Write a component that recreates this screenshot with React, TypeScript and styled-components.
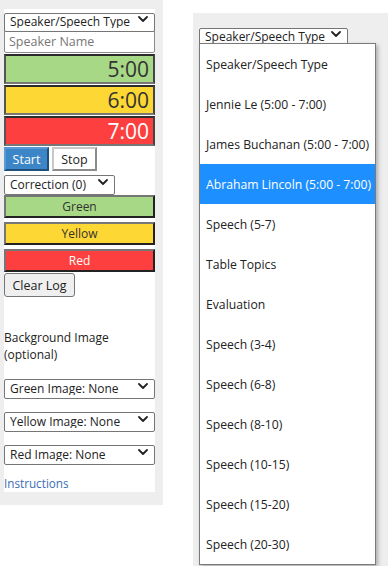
import React from "react";
import styled, { createGlobalStyle } from "styled-components";

const Global = createGlobalStyle`
  html, body { margin: 0; padding: 0; background: #fff; }
  body { font-family: "Open Sans", "Noto Sans", sans-serif; overflow: hidden; color: #222; }
  * { box-sizing: border-box; }
`;

const Page = styled.div`
  display: flex;
  align-items: flex-start;
  width: 388px;
  height: 566px;
  overflow: hidden;
`;

const Outer = styled.div`
  flex: none;
  background: #eeeeee;
  padding: 9px 8px 13px 4px;
`;

const Panel = styled.div`
  width: 151px;
  background: #fff;
  display: flex;
  flex-direction: column;
`;

const SelectWrap = styled.div<{ $w?: number; $mb?: number; $mt?: number; $h?: number }>`
  position: relative;
  width: ${(p) => (p.$w ? `${p.$w}px` : "100%")};
  height: ${(p) => p.$h ?? 19}px;
  margin-top: ${(p) => p.$mt ?? 0}px;
  margin-bottom: ${(p) => p.$mb ?? 0}px;
  flex: none;
`;

const NativeSelect = styled.select`
  appearance: none;
  -webkit-appearance: none;
  width: 100%;
  height: 100%;
  margin: 0;
  border: 1px solid #767676;
  border-radius: 2px;
  background: #fff;
  color: #222;
  font-family: "Open Sans", "Noto Sans", sans-serif;
  font-size: 12px;
  line-height: 1;
  padding: 0 20px 0 5px;
  outline: none;
`;

const Chevron = styled.svg`
  position: absolute;
  right: 7px;
  top: 50%;
  margin-top: -3px;
  width: 10px;
  height: 6px;
  pointer-events: none;
`;

const Select: React.FC<{ label: string; w?: number; mb?: number; mt?: number; h?: number }> = ({ label, w, mb, mt, h }) => (
  <SelectWrap $w={w} $mb={mb} $mt={mt} $h={h}>
    <NativeSelect defaultValue={label}>
      <option>{label}</option>
    </NativeSelect>
    <Chevron viewBox="0 0 10 6">
      <path d="M1 1 L5 5 L9 1" fill="none" stroke="#222" strokeWidth="1.8" strokeLinecap="round" strokeLinejoin="round" />
    </Chevron>
  </SelectWrap>
);

const NameInput = styled.input`
  height: 24px;
  margin: 1px 0 1px;
  width: 100%;
  border: 1px solid #8a8a8a;
  border-radius: 2px;
  padding: 0 4px;
  font-family: "Open Sans", "Noto Sans", sans-serif;
  font-size: 12.5px;
  color: #222;
  outline: none;
  &::placeholder { color: #777; }
`;

const TimerBox = styled.div<{ $bg: string; $fg: string }>`
  height: 30px;
  margin-bottom: 1px;
  background: ${(p) => p.$bg};
  color: ${(p) => p.$fg};
  border-style: solid;
  border-width: 2px;
  border-color: #2b2b2b #444 #777 #555;
  text-align: right;
  padding-right: 4px;
  font-size: 21px;
  line-height: 26px;
`;

const ButtonRow = styled.div`
  display: flex;
  gap: 3px;
  margin-bottom: 1px;
`;

const StartButton = styled.button`
  width: 45px;
  height: 24px;
  padding: 0;
  background: #3c86c8;
  color: #fff;
  border: 2px solid;
  border-color: #5a9ad4 #1f4f7c #1f4f7c #5a9ad4;
  font-family: "Open Sans", "Noto Sans", sans-serif;
  font-size: 12.5px;
`;

const StopButton = styled.button`
  width: 45px;
  height: 24px;
  padding: 0;
  background: #fff;
  color: #222;
  border: 2px solid;
  border-color: #c8c8c8 #8c8c8c #8c8c8c #c8c8c8;
  font-family: "Open Sans", "Noto Sans", sans-serif;
  font-size: 12.5px;
`;

const ColorButton = styled.button<{ $bg: string; $fg: string; $mb: number }>`
  width: 100%;
  height: 23px;
  margin-bottom: ${(p) => p.$mb}px;
  padding: 0;
  background: ${(p) => p.$bg};
  color: ${(p) => p.$fg};
  border: 2px solid;
  border-color: #767676 #222 #222 #767676;
  font-family: "Open Sans", "Noto Sans", sans-serif;
  font-size: 12px;
`;

const ClearButton = styled.button`
  align-self: flex-start;
  width: 71px;
  height: 24px;
  padding: 0;
  background: #efefef;
  color: #222;
  border: 1px solid #767676;
  border-radius: 3px;
  font-family: "Open Sans", "Noto Sans", sans-serif;
  font-size: 12.5px;
`;

const Label = styled.div`
  margin-top: 32px;
  font-size: 12px;
  line-height: 17px;
  color: #222;
`;

const Link = styled.a`
  margin-top: 13px;
  font-size: 11.7px;
  line-height: 17px;
  color: #3a6db4;
  text-decoration: none;
`;

const RightOuter = styled.div`
  flex: 1;
  margin: 13px 0 0 30px;
  height: 600px;
  background: #eeeeee;
  padding: 11px 6px;
`;

const DropWrap = styled.div`
  position: relative;
  width: 149px;
`;

const OptionList = styled.ul`
  position: absolute;
  top: 19px;
  left: 0;
  width: 177px;
  margin: 0;
  padding: 0;
  list-style: none;
  background: #fff;
  border: 1px solid #7a7a7a;
  box-shadow: 2px 2px 4px rgba(0, 0, 0, 0.28);
  z-index: 2;
`;

const OptionItem = styled.li<{ $active?: boolean }>`
  height: 40px;
  display: flex;
  align-items: center;
  padding-left: 6px;
  font-size: 12.2px;
  color: ${(p) => (p.$active ? "#fff" : "#222")};
  background: ${(p) => (p.$active ? "#1e8fff" : "transparent")};
  white-space: nowrap;
`;

const options = [
  "Speaker/Speech Type",
  "Jennie Le (5:00 - 7:00)",
  "James Buchanan (5:00 - 7:00)",
  "Abraham Lincoln (5:00 - 7:00)",
  "Speech (5-7)",
  "Table Topics",
  "Evaluation",
  "Speech (3-4)",
  "Speech (6-8)",
  "Speech (8-10)",
  "Speech (10-15)",
  "Speech (15-20)",
  "Speech (20-30)",
];

export default function App() {
  return (
    <>
      <Global />
      <Page>
        <Outer>
          <Panel>
            <Select label="Speaker/Speech Type" />
            <NameInput placeholder="Speaker Name" />
            <TimerBox $bg="#a6d886" $fg="#333">5:00</TimerBox>
            <TimerBox $bg="#fdd835" $fg="#333">6:00</TimerBox>
            <TimerBox $bg="#fd3f3f" $fg="#fff">7:00</TimerBox>
            <ButtonRow>
              <StartButton>Start</StartButton>
              <StopButton>Stop</StopButton>
            </ButtonRow>
            <Select label="Correction (0)" w={111} h={20} mb={3} />
            <ColorButton $bg="#a6d886" $fg="#333" $mb={4}>Green</ColorButton>
            <ColorButton $bg="#fdd835" $fg="#333" $mb={4}>Yellow</ColorButton>
            <ColorButton $bg="#fd3f3f" $fg="#fff" $mb={1}>Red</ColorButton>
            <ClearButton>Clear Log</ClearButton>
            <Label>
              Background Image
              <br />
              (optional)
            </Label>
            <Select label="Green Image: None" h={20} mt={13} />
            <Select label="Yellow Image: None" h={20} mt={13} />
            <Select label="Red Image: None" h={20} mt={13} />
            <Link href="#">Instructions</Link>
          </Panel>
        </Outer>
        <RightOuter>
          <DropWrap>
            <Select label="Speaker/Speech Type" />
            <OptionList>
              {options.map((o) => (
                <OptionItem key={o} $active={o.startsWith("Abraham")}>
                  {o}
                </OptionItem>
              ))}
            </OptionList>
          </DropWrap>
        </RightOuter>
      </Page>
    </>
  );
}
